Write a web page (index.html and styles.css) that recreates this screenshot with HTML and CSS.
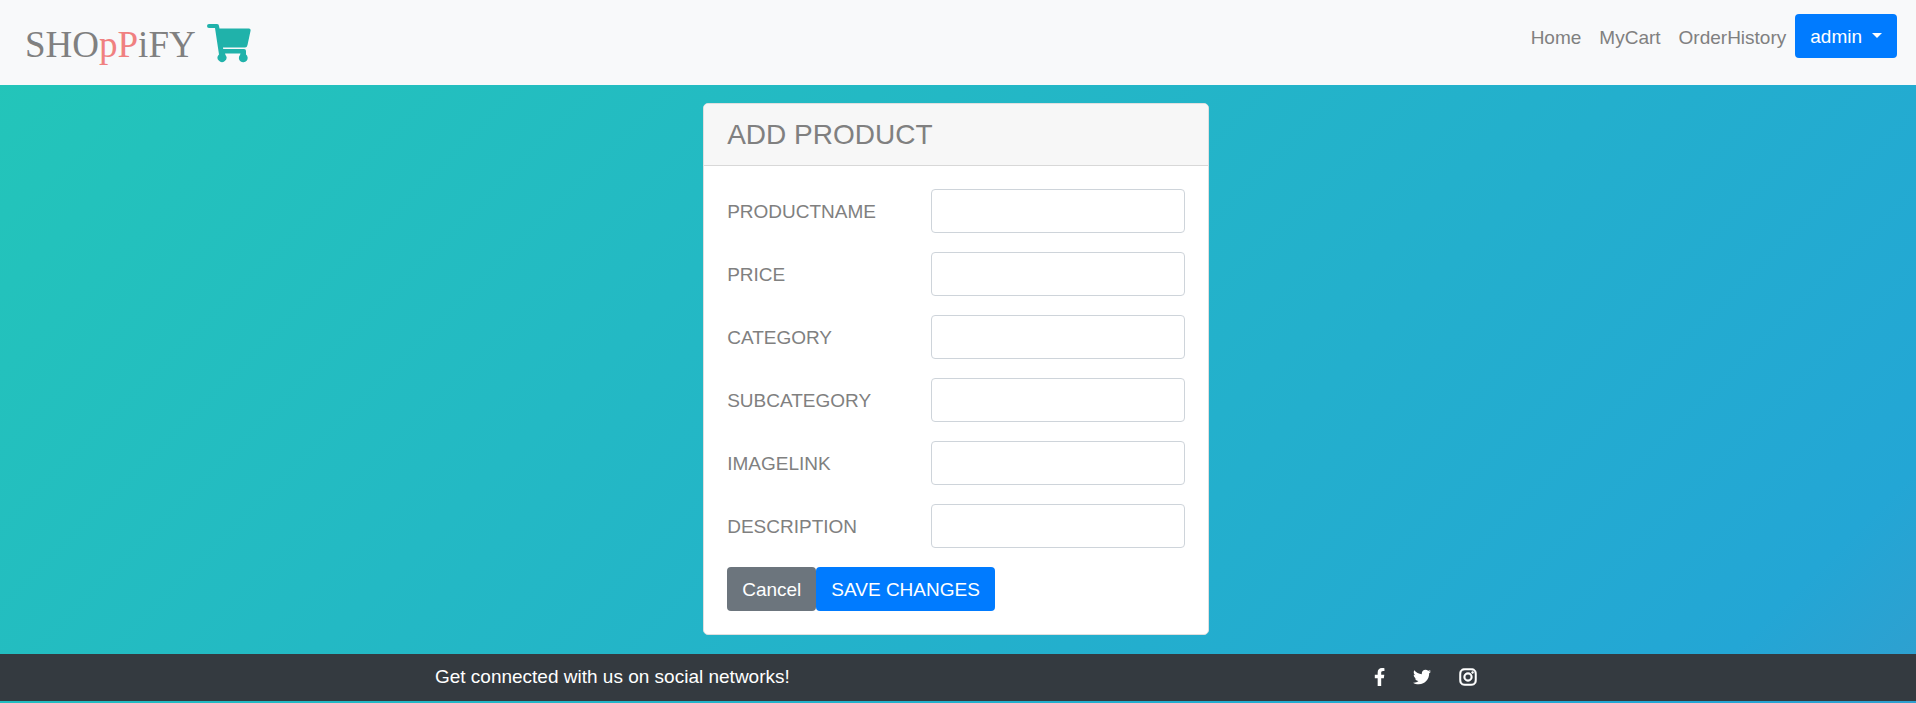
FILE: index.html
```html
<!DOCTYPE html>
<html lang="en">
<head>
<meta charset="utf-8">
<meta name="viewport" content="width=device-width, initial-scale=1">
<title>Shoppify</title>
<link rel="stylesheet" href="styles.css">
</head>
<body>
<header class="navbar">
  <a class="brand" href="#">
    <span>SHO<span class="brand-accent">pP</span>iFY</span>
    <svg class="brand-cart" viewBox="0 0 44 40" aria-hidden="true">
      <path d="M2 1H10Q12 1 12 3L12.500 5.500H42Q44 5.500 43.500 8L40.500 22Q40 24.500 38 24.500H16L16.200 26H37Q39 26 39 28V31.500A4.400 4.400 0 1 1 33 32L33.500 30.500H18L18.500 32A4.400 4.400 0 1 1 12 31.500L8 5H2Q0 5 0 3Q0 1 2 1Z"/>
    </svg>
  </a>
  <nav class="menu">
    <a class="menu-link" href="#">Home</a>
    <a class="menu-link" href="#">MyCart</a>
    <a class="menu-link" href="#">OrderHistory</a>
    <button class="btn btn-primary" type="button">admin<span class="caret"></span></button>
  </nav>
</header>
<main class="content">
  <form class="card">
    <h1 class="card-title">ADD PRODUCT</h1>
    <div class="card-body">
      <div class="field"><label for="productname">PRODUCTNAME</label><input id="productname" type="text"></div>
      <div class="field"><label for="price">PRICE</label><input id="price" type="text"></div>
      <div class="field"><label for="category">CATEGORY</label><input id="category" type="text"></div>
      <div class="field"><label for="subcategory">SUBCATEGORY</label><input id="subcategory" type="text"></div>
      <div class="field"><label for="imagelink">IMAGELINK</label><input id="imagelink" type="text"></div>
      <div class="field"><label for="description">DESCRIPTION</label><input id="description" type="text"></div>
      <div class="actions">
        <button class="btn btn-secondary" type="button">Cancel</button>
        <button class="btn btn-primary" type="submit">SAVE CHANGES</button>
      </div>
    </div>
  </form>
</main>
<footer class="footer">
  <p class="footer-text">Get connected with us on social networks!</p>
  <div class="social">
    <a href="#" aria-label="Facebook"><svg viewBox="0 0 320 512"><path d="M279.140 288l14.220-92.660h-88.910v-60.130c0-25.350 12.420-50.060 52.240-50.060h40.420V6.260S260.430 0 225.360 0c-73.220 0-121.080 44.380-121.080 124.720v70.620H22.890V288h81.390v224h100.170V288z"/></svg></a>
    <a href="#" aria-label="Twitter"><svg viewBox="0 0 512 512"><path d="M459.370 151.716c.325 4.548.325 9.097.325 13.645 0 138.720-105.583 298.558-298.558 298.558-59.452 0-114.680-17.219-161.137-47.106 8.447.974 16.568 1.299 25.340 1.299 49.055 0 94.213-16.568 130.274-44.832-46.132-.975-84.792-31.188-98.112-72.772 6.498.974 12.995 1.624 19.818 1.624 9.421 0 18.843-1.300 27.614-3.573-48.081-9.747-84.143-51.980-84.143-102.985v-1.299c13.969 7.797 30.214 12.670 47.431 13.319-28.264-18.843-46.781-51.005-46.781-87.391 0-19.492 5.197-37.360 14.294-52.954 51.655 63.675 129.300 105.258 216.365 109.807-1.624-7.797-2.599-15.918-2.599-24.040 0-57.828 46.782-104.934 104.934-104.934 30.213 0 57.502 12.670 76.670 33.137 23.715-4.548 46.456-13.320 66.599-25.340-7.798 24.366-24.366 44.833-46.132 57.827 21.117-2.273 41.584-8.122 60.426-16.243-14.292 20.791-32.161 39.308-52.628 54.253z"/></svg></a>
    <a href="#" aria-label="Instagram"><svg class="outlined" viewBox="-12 20 472 472"><path d="M224.100 141c-63.600 0-114.900 51.300-114.900 114.900s51.300 114.900 114.900 114.900S339 319.500 339 255.900 287.700 141 224.100 141zm0 189.600c-41.100 0-74.700-33.500-74.700-74.700s33.500-74.700 74.700-74.700 74.700 33.500 74.700 74.700-33.600 74.700-74.700 74.700zm146.400-194.300c0 14.900-12 26.800-26.800 26.800-14.900 0-26.800-12-26.800-26.800s12-26.800 26.800-26.800 26.800 12 26.800 26.800zm76.100 27.200c-1.700-35.900-9.900-67.700-36.200-93.900-26.200-26.200-58-34.400-93.900-36.200-37-2.100-147.900-2.100-184.900 0-35.800 1.700-67.600 9.900-93.900 36.100s-34.400 58-36.200 93.900c-2.100 37-2.100 147.900 0 184.900 1.700 35.900 9.900 67.700 36.200 93.900s58 34.400 93.900 36.200c37 2.100 147.900 2.100 184.900 0 35.900-1.700 67.700-9.900 93.900-36.200 26.200-26.200 34.400-58 36.200-93.900 2.100-37 2.100-147.800 0-184.800zM398.800 388c-7.800 19.600-22.900 34.700-42.600 42.600-29.500 11.700-99.500 9-132.100 9s-102.700 2.600-132.100-9c-19.600-7.800-34.700-22.900-42.600-42.600-11.700-29.500-9-99.500-9-132.100s-2.600-102.700 9-132.100c7.800-19.600 22.900-34.700 42.600-42.600 29.500-11.700 99.500-9 132.100-9s102.700-2.600 132.100 9c19.600 7.800 34.700 22.900 42.600 42.600 11.700 29.500 9 99.500 9 132.100s2.700 102.700-9 132.100z"/></svg></a>
  </div>
</footer>
</body>
</html>
```
FILE: styles.css
```css
* {
  box-sizing: border-box;
}

body {
  margin: 0;
  min-height: 100vh;
  font: 19px/27px "Liberation Sans", Arial, sans-serif;
  color: gray;
  background: linear-gradient(135deg, #23d5ab -43%, #23a6d5 91%, #e73c7e 224%) no-repeat;
}

.navbar {
  display: flex;
  justify-content: space-between;
  align-items: flex-start;
  padding: 14px 19px 13px 25px;
  background: #f8f9fa;
}

.brand {
  display: flex;
  align-items: center;
  gap: 11px;
  padding-top: 4px;
  color: gray;
  font: 37px/54px "Liberation Serif", "Times New Roman", serif;
  text-decoration: none;
}

.brand-accent {
  color: lightcoral;
}

.brand-cart {
  width: 44px;
  height: 40px;
  margin-bottom: 4px;
  fill: lightseagreen;
}

.menu {
  display: flex;
  align-items: center;
}

.menu-link {
  padding: 2px 9px 0;
  color: gray;
  text-decoration: none;
}

.btn {
  height: 44px;
  padding: 0 15px;
  border: 0;
  border-radius: 4px;
  color: #fff;
  font: inherit;
}

.btn-primary {
  background: #007bff;
}

.btn-secondary {
  background: #6c757d;
}

.caret {
  display: inline-block;
  margin-left: 10px;
  vertical-align: 5px;
  border: 5px solid transparent;
  border-top-color: #fff;
  border-bottom: 0;
}

.content {
  padding: 18px 0 19px;
}

.card {
  width: 26.4%;
  min-width: 440px;
  margin: 0 0 0 36.7%;
  border: 1px solid #dfdfdf;
  border-radius: 5px;
  background: #fff;
}

.card-title {
  margin: 0;
  padding: 14px 23px;
  border-bottom: 1px solid #d8d8d8;
  border-radius: 4px 4px 0 0;
  background: #f7f7f7;
  font-size: 28px;
  line-height: 33px;
  font-weight: 400;
}

.card-body {
  padding: 23px;
}

.field {
  display: grid;
  grid-template-columns: 4fr 5fr;
  align-items: center;
  margin-bottom: 19px;
}

.field input {
  width: 100%;
  min-width: 0;
  height: 44px;
  padding: 0 14px;
  border: 1px solid #ced4da;
  border-radius: 4px;
  background: #fff;
  color: #495057;
  font: inherit;
}

.actions {
  display: flex;
}

.footer {
  display: flex;
  justify-content: space-between;
  align-items: center;
  padding: 9px 22.9% 11px 22.7%;
  background: #343a40;
  color: #fff;
}

.footer-text {
  margin: 0;
}

.social {
  display: flex;
  gap: 28px;
}

.social a {
  display: flex;
}

.social svg {
  height: 18px;
  fill: #fff;
}

.social .outlined {
  stroke: #fff;
  stroke-width: 14;
}
```
